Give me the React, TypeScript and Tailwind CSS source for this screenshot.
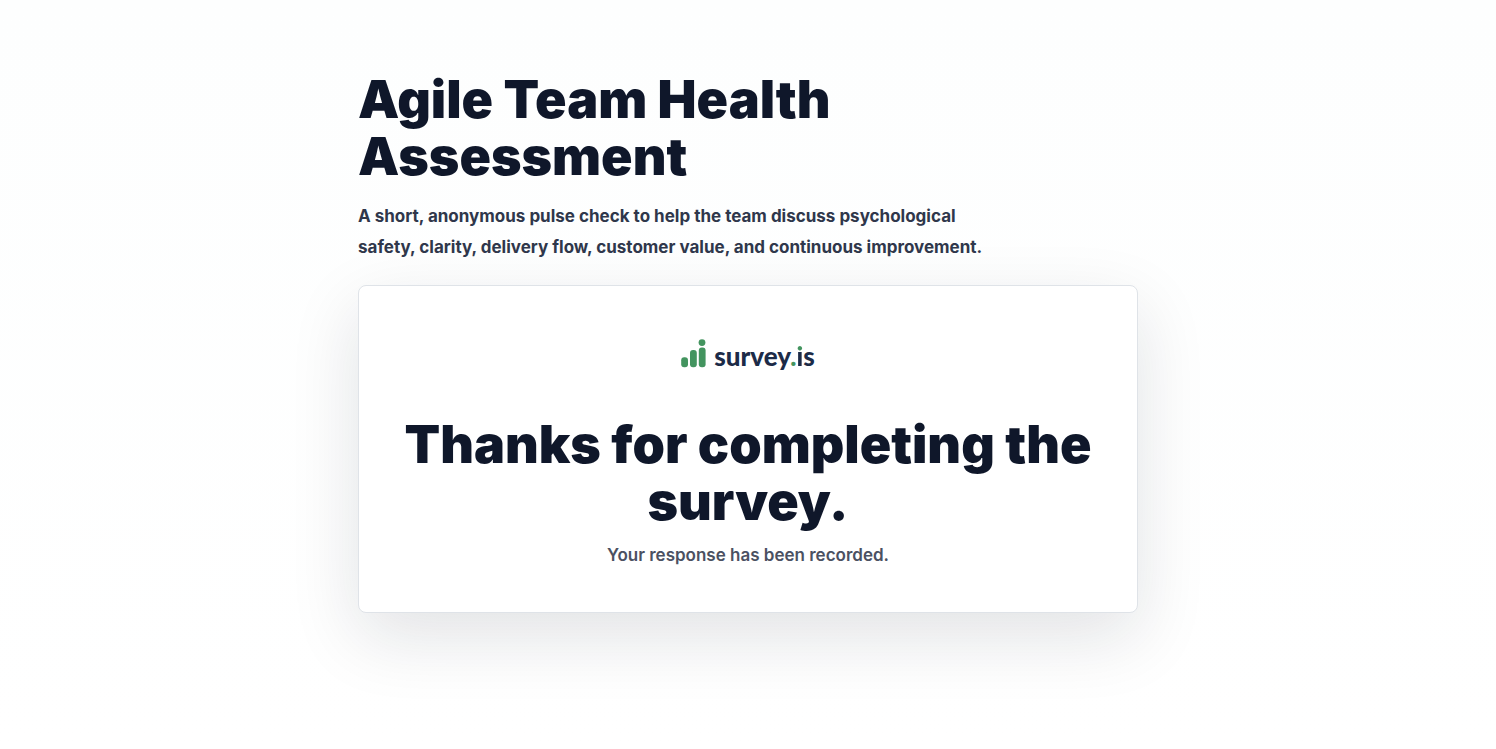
function Logo() {
  return (
    <div className="flex h-12 items-center justify-center gap-2">
      <svg viewBox="0 0 25 30" className="h-[30px] w-[25px]" fill="#43945f" aria-hidden="true">
        <rect x="0.2" y="18.2" width="6.8" height="10" rx="3" />
        <rect x="9" y="11" width="6.8" height="17.2" rx="3" />
        <rect x="17.8" y="8.6" width="6.8" height="19.6" rx="3" />
        <circle cx="21" cy="3.6" r="3.4" />
      </svg>
      <span className="pt-1 font-['Lato',sans-serif] text-[26px] leading-8 font-black text-[#1c2b48]">
        survey<span className="text-[#43945f]">.</span>
        {/* green dot over a navy stem */}
        <span className="bg-[linear-gradient(#43945f_11px,#1c2b48_11px)] bg-clip-text text-transparent">i</span>s
      </span>
    </div>
  );
}

export default function App() {
  return (
    <main className="min-h-screen bg-linear-to-b from-[#fdfefe] to-white px-4 py-[71px] font-['Inter',sans-serif] text-[#0f172a]">
      <div className="mx-auto max-w-[780px]">
        <header className="mb-[22px]">
          <h1 className="max-w-[640px] text-[52px] leading-[57px] font-black">
            Agile Team Health Assessment
          </h1>
          <p className="mt-4 max-w-[650px] text-[17px] leading-[31px] font-bold text-[#2f374b]">
            A short, anonymous pulse check to help the team discuss psychological safety, clarity, delivery flow,
            customer value, and continuous improvement.
          </p>
        </header>

        <section className="rounded-lg border border-[#dfe3e8] bg-white px-8 py-11 text-center shadow-[0_24px_70px_rgba(15,23,42,0.12)]">
          <Logo />
          <h2 className="mt-[38px] text-[52px] leading-[57px] font-black">Thanks for completing the survey.</h2>
          <p className="mt-3 text-[17px] leading-[26px] font-semibold text-[#4b5162]">
            Your response has been recorded.
          </p>
        </section>
      </div>
    </main>
  );
}
